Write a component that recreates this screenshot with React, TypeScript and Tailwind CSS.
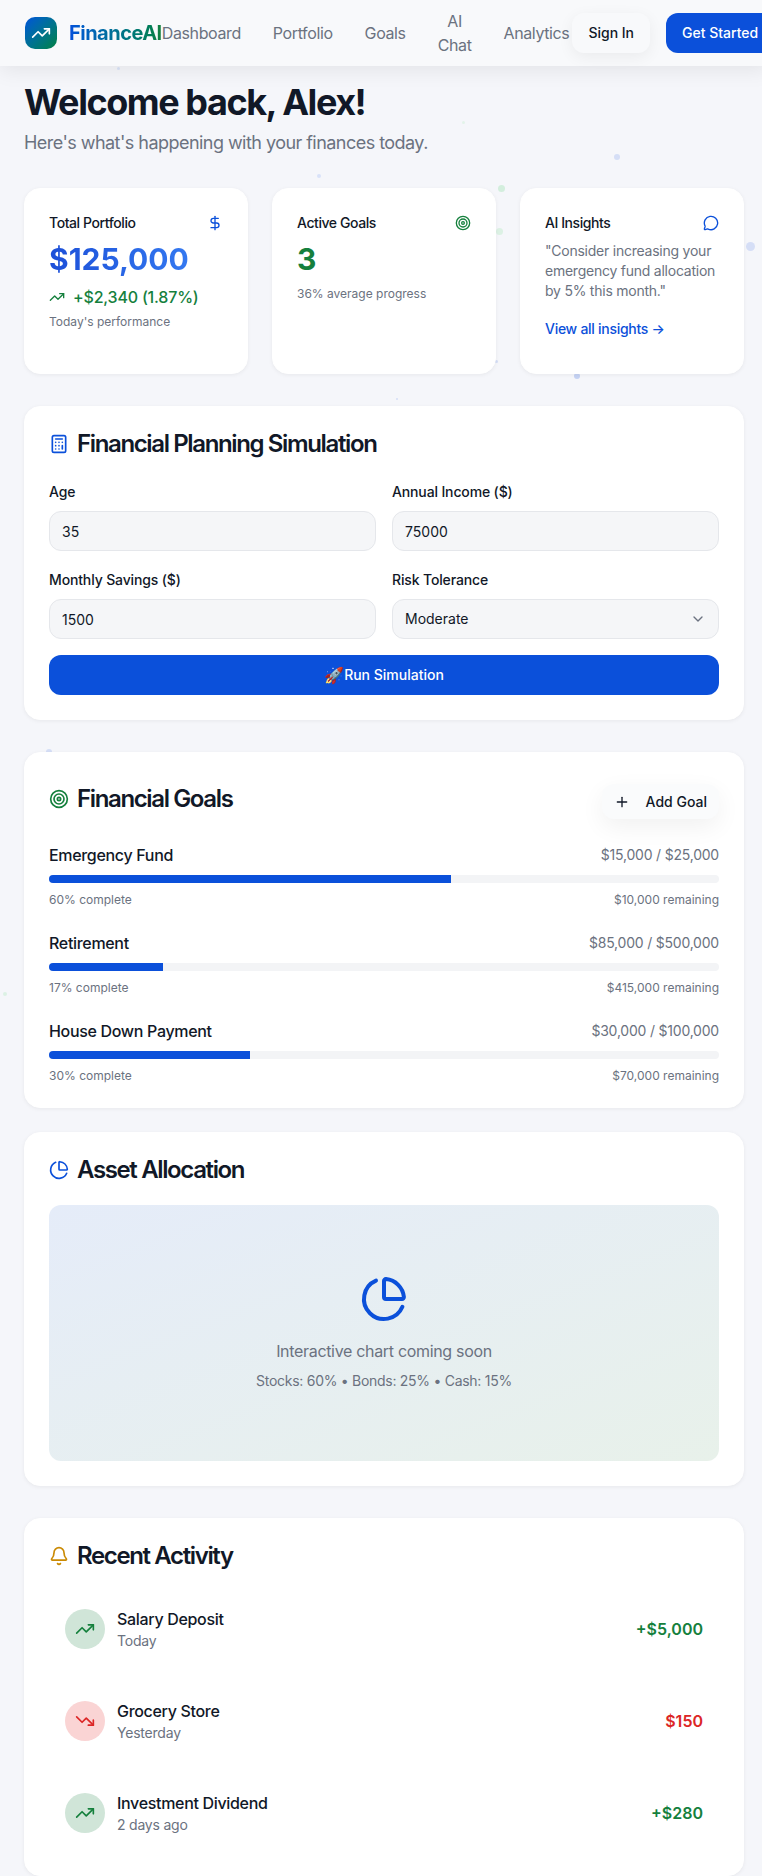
import React from 'react';
import {
  Bell,
  Calculator,
  ChartPie,
  ChevronDown,
  DollarSign,
  MessageCircle,
  Plus,
  Target,
  TrendingDown,
  TrendingUp,
} from 'lucide-react';

const particles = [
  { x: 117, y: 67, size: 3, color: '#dbe4f8' },
  { x: 462, y: 121, size: 3, color: '#e3f3e9' },
  { x: 614, y: 154, size: 6, color: '#d5def6' },
  { x: 317, y: 174, size: 4, color: '#d9e2f8' },
  { x: 498, y: 185, size: 7, color: '#d3eedd' },
  { x: 496, y: 228, size: 7, color: '#dcf1e4' },
  { x: 746, y: 242, size: 9, color: '#d5def6' },
  { x: 495, y: 360, size: 3, color: '#d5def6' },
  { x: 574, y: 373, size: 6, color: '#c5d2f3' },
  { x: 396, y: 398, size: 2, color: '#d5def6' },
  { x: 46, y: 749, size: 6, color: '#d5def6' },
  { x: 3, y: 992, size: 4, color: '#dcf1e4' },
];

const goals = [
  { name: 'Emergency Fund', amount: '$15,000 / $25,000', pct: 60, left: '$10,000 remaining' },
  { name: 'Retirement', amount: '$85,000 / $500,000', pct: 17, left: '$415,000 remaining' },
  { name: 'House Down Payment', amount: '$30,000 / $100,000', pct: 30, left: '$70,000 remaining' },
];

const activity = [
  { name: 'Salary Deposit', when: 'Today', amount: '+$5,000', up: true },
  { name: 'Grocery Store', when: 'Yesterday', amount: '$150', up: false },
  { name: 'Investment Dividend', when: '2 days ago', amount: '+$280', up: true },
];

const cardClass = 'rounded-2xl border border-white bg-white p-6 shadow-[0_1px_4px_rgba(0,0,0,0.06)]';
const fieldClass =
  'h-10 w-full rounded-xl border border-[#e5e7eb] bg-[#f5f6f8] px-3 text-sm text-[#111827] outline-none';
const titleClass = 'flex items-center gap-2 text-2xl leading-[26px] font-semibold tracking-[-0.057em]';
const labelClass = 'mb-1.5 flex h-[26px] items-center text-sm font-medium tracking-[-0.01em] text-[#111827]';
const cardTitleClass = 'text-sm font-medium tracking-[-0.03em]';

const Field: React.FC<{ label: string; value: string }> = ({ label, value }) => (
  <div>
    <label className={labelClass}>{label}</label>
    <input className={fieldClass} defaultValue={value} />
  </div>
);

const App: React.FC = () => {
  return (
    <div className="h-[1876px] w-[762px] overflow-hidden">
      <div className="relative h-[1876px] w-[768px] bg-[#f5f6fa] font-['Inter',sans-serif] text-[#111827]">
        {particles.map((p, i) => (
          <span
            key={i}
            className="absolute rounded-full"
            style={{ left: p.x, top: p.y, width: p.size, height: p.size, backgroundColor: p.color }}
          />
        ))}

        <header className="relative flex h-[66px] items-center bg-[#f8f9fb] pl-[25px] shadow-[0_4px_20px_rgba(0,0,0,0.08)]">
          <div className="flex shrink-0 items-center gap-3">
            <div className="flex h-8 w-8 items-center justify-center rounded-[10px] bg-gradient-to-br from-[#0b50da] to-[#15803d] text-white">
              <TrendingUp size={20} />
            </div>
            <span className="bg-gradient-to-r from-[#0b50da] to-[#15803d] bg-clip-text text-xl font-bold tracking-[-0.025em] text-transparent">
              FinanceAI
            </span>
          </div>
          <nav className="flex shrink-0 items-center gap-8 text-base tracking-[-0.024em] text-[#6b7280]">
            <a>Dashboard</a>
            <a>Portfolio</a>
            <a>Goals</a>
            <a className="w-min text-center">AI Chat</a>
            <a>Analytics</a>
          </nav>
          <div className="ml-[3px] flex shrink-0 items-center gap-4">
            <button className="h-10 rounded-xl bg-[#f8f9fb] px-4 text-sm font-medium text-[#111827] shadow-[0_4px_16px_rgba(0,0,0,0.06)]">
              Sign In
            </button>
            <button className="h-10 rounded-xl bg-[#0b50da] px-4 text-sm font-medium text-white">
              Get Started
            </button>
          </div>
        </header>

        <main className="relative px-6 pt-4">
          <h1 className="text-4xl font-bold tracking-[-0.04em] text-[#111827]">Welcome back, Alex!</h1>
          <p className="mt-[7px] text-lg tracking-[-0.03em] text-[#6b7280]">
            Here's what's happening with your finances today.
          </p>

          <div className="mt-[31px] grid h-[186px] grid-cols-3 gap-6">
            <div className={cardClass}>
              <div className="flex items-center justify-between">
                <h3 className={cardTitleClass}>Total Portfolio</h3>
                <DollarSign size={16} className="text-[#0b50da]" />
              </div>
              <div className="mt-2 bg-gradient-to-r from-[#1d4fd8] to-[#3b82f6] bg-clip-text text-3xl font-bold text-transparent">
                $125,000
              </div>
              <div className="mt-2 flex items-center gap-2 font-medium tracking-[-0.012em] text-[#15803d]">
                <TrendingUp size={16} />
                <span>+$2,340 (1.87%)</span>
              </div>
              <p className="mt-[5px] text-xs text-[#6b7280]">Today's performance</p>
            </div>

            <div className={cardClass}>
              <div className="flex items-center justify-between">
                <h3 className={cardTitleClass}>Active Goals</h3>
                <Target size={16} className="text-[#15803d]" />
              </div>
              <div className="mt-2 text-3xl font-bold text-[#15803d]">3</div>
              <p className="mt-[9px] text-xs text-[#6b7280]">36% average progress</p>
            </div>

            <div className={cardClass}>
              <div className="flex items-center justify-between">
                <h3 className={cardTitleClass}>AI Insights</h3>
                <MessageCircle size={16} className="text-[#0b50da]" />
              </div>
              <p className="mt-2 text-sm tracking-[-0.017em] text-[#6b7280]">
                "Consider increasing your emergency fund allocation by 5% this month."
              </p>
              <a className="mt-[18px] block text-sm font-medium tracking-[-0.02em] text-[#0b50da]">
                View all insights →
              </a>
            </div>
          </div>

          <section className={`mt-8 ${cardClass}`}>
            <h2 className={`mb-[22px] ${titleClass}`}>
              <Calculator size={20} className="text-[#0b50da]" />
              Financial Planning Simulation
            </h2>
            <div className="grid grid-cols-2 gap-4">
              <Field label="Age" value="35" />
              <Field label="Annual Income ($)" value="75000" />
              <Field label="Monthly Savings ($)" value="1500" />
              <div>
                <label className={labelClass}>Risk Tolerance</label>
                <div className="relative">
                  <select className={`appearance-none ${fieldClass}`} defaultValue="Moderate">
                    <option>Moderate</option>
                  </select>
                  <ChevronDown size={16} className="absolute top-3 right-[13px] text-[#6b7280]" />
                </div>
              </div>
            </div>
            <button className="mt-4 flex h-10 w-full items-center justify-center rounded-xl bg-[#0b50da] text-sm font-medium text-white">
              <span className="text-base leading-none">🚀</span>Run Simulation
            </button>
          </section>

          <section className={`mt-8 ${cardClass}`}>
            <div className="mb-6 flex h-[42px] items-center justify-between">
              <h2 className={`pt-0.5 ${titleClass}`}>
                <Target size={20} className="text-[#15803d]" />
                Financial Goals
              </h2>
              <button className="flex h-[35px] items-center gap-4 self-end rounded-xl bg-[#fafbfc] px-3 text-sm font-medium shadow-[0_8px_24px_rgba(0,0,0,0.06)]">
                <Plus size={16} />
                Add Goal
              </button>
            </div>
            <div className="flex flex-col gap-6">
              {goals.map((goal) => (
                <div key={goal.name}>
                  <div className="flex items-center justify-between">
                    <span className="font-medium tracking-[-0.02em]">{goal.name}</span>
                    <span className="text-sm tracking-[-0.015em] text-[#6b7280]">{goal.amount}</span>
                  </div>
                  <div className="mt-2 h-2 overflow-hidden rounded-full bg-[#f3f4f6]">
                    <div className="h-full bg-[#0b50da]" style={{ width: `${goal.pct}%` }} />
                  </div>
                  <div className="mt-[9px] -mb-px flex justify-between text-xs text-[#6b7280]">
                    <span>{goal.pct}% complete</span>
                    <span>{goal.left}</span>
                  </div>
                </div>
              ))}
            </div>
          </section>

          <section className={`mt-6 ${cardClass}`}>
            <h2 className={`mb-[22px] ${titleClass}`}>
              <ChartPie size={20} className="text-[#0b50da]" />
              Asset Allocation
            </h2>
            <div className="flex h-64 flex-col items-center justify-center rounded-xl bg-gradient-to-br from-[#e5ecf9] to-[#e8f1ea]">
              <ChartPie size={48} className="text-[#0b50da]" />
              <p className="mt-4 tracking-[-0.02em] text-[#6b7280]">Interactive chart coming soon</p>
              <p className="mt-2 text-sm tracking-[-0.02em] text-[#6b7280]">Stocks: 60% • Bonds: 25% • Cash: 15%</p>
            </div>
          </section>

          <section className={`mt-8 ${cardClass}`}>
            <h2 className={`mb-[22px] ${titleClass}`}>
              <Bell size={20} className="text-[#ca8a04]" />
              Recent Activity
            </h2>
            <div className="flex flex-col gap-4">
              {activity.map((item) => (
                <div key={item.name} className="flex items-center justify-between p-4">
                  <div className="flex items-center gap-3">
                    <div
                      className={`flex h-10 w-10 items-center justify-center rounded-full ${
                        item.up ? 'bg-[#d0e5d8] text-[#15803d]' : 'bg-[#fad4d4] text-[#dc2626]'
                      }`}
                    >
                      {item.up ? <TrendingUp size={20} /> : <TrendingDown size={20} />}
                    </div>
                    <div>
                      <div className="font-medium tracking-[-0.02em]">{item.name}</div>
                      <div className="text-sm tracking-[-0.015em] text-[#6b7280]">{item.when}</div>
                    </div>
                  </div>
                  <span className={`font-semibold ${item.up ? 'text-[#15803d]' : 'text-[#dc2626]'}`}>
                    {item.amount}
                  </span>
                </div>
              ))}
            </div>
          </section>
        </main>
      </div>
    </div>
  );
};

export default App;
